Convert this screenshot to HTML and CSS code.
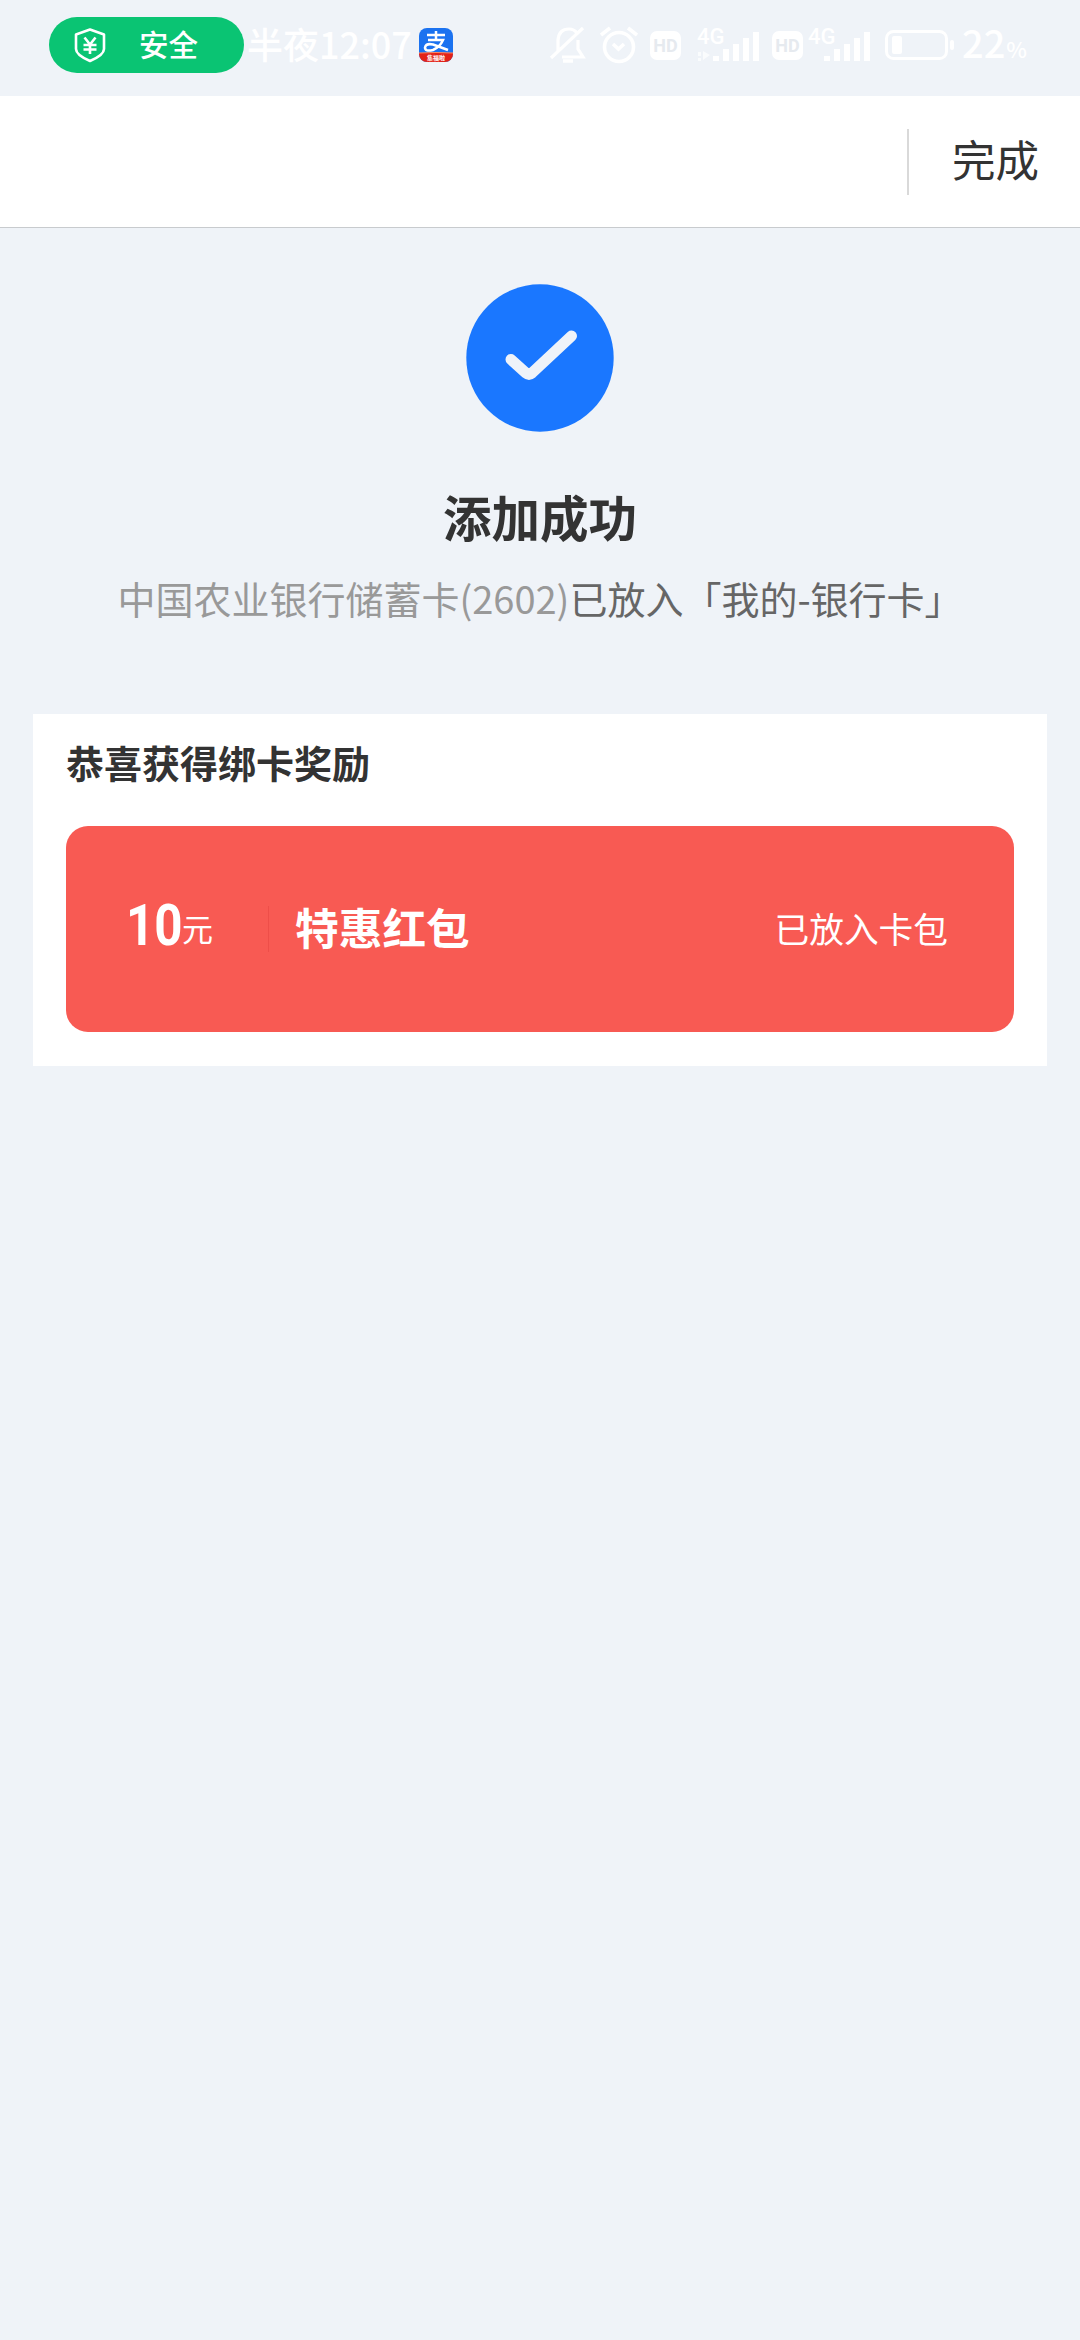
FILE: index.html
```html
<!DOCTYPE html>
<html lang="zh-CN">
<head>
  <meta charset="utf-8">
  <title>添加成功</title>
  <link rel="stylesheet" href="styles.css">
</head>
<body>
  <div class="statusbar">
    <div class="safe">
      <svg width="32" height="36" viewBox="0 0 32 36" fill="none" stroke="#fff" stroke-width="2.6" stroke-linejoin="round">
        <path d="M16 2.5 30 7.500V22Q30 28 16 34Q2 28 2 22V7.500Z"/>
        <path d="M10.500 10.500 16 17.500 21.500 10.500M16 17.500V27M9.500 18H22.500M9.500 22.500H22.500"/>
      </svg>
      <span>安全</span>
    </div>
    <span class="clock">半夜12:07</span>
    <svg class="alipay" width="34" height="34" viewBox="0 0 34 34">
      <defs><clipPath id="app"><rect width="34" height="34" rx="8"/></clipPath></defs>
      <g clip-path="url(#app)">
        <rect width="34" height="34" fill="#1b72f0"/>
        <path d="M0 25Q17 24 34 25V34H0Z" fill="#e32218"/>
        <path d="M0 25Q17 24 34 25" fill="none" stroke="#ff8a62" stroke-width="1"/>
        <path d="M17 3V12M8 7H26M9 12H24Q21 19 14 22Q6 24 6 19.500Q7 15 14 16.500Q21 19 29 22" fill="none" stroke="#fff" stroke-width="2.500"/>
        <text x="17" y="32" class="alipay-tag">集福啦</text>
      </g>
    </svg>

    <div class="icons">
      <svg class="bell" width="38" height="38" viewBox="0 0 38 38" fill="none" stroke="#fff" stroke-width="3.200">
        <path d="M9 25V14Q10 3 20 3Q25 3 28 7M29 14V23L34 31H13M2 32 34 2"/>
        <path d="M14 35H24" stroke-width="3.500"/>
      </svg>
      <svg class="alarm" width="38" height="38" viewBox="0 0 38 38" fill="none" stroke="#fff" stroke-width="3.600">
        <circle cx="19" cy="21" r="14.500"/>
        <path d="M1 9 10 2M28 2 37 9M13 18 18.500 23 24 18"/>
      </svg>
      <span class="hd">HD</span>
      <div class="signal">
        <span>4G</span>
        <svg width="64" height="32" viewBox="0 0 64 32" fill="#fff">
          <path d="M1 22H4V26H1ZM1 28H4V31H1ZM6 21 13 25 6 30Z" opacity=".7"/>
          <path d="M16 26H22V31H16ZM26 19H32V31H26ZM36 14H42V31H36ZM46 8H52V31H46ZM56 2H62V31H56Z"/>
        </svg>
      </div>
      <span class="hd">HD</span>
      <div class="signal">
        <span>4G</span>
        <svg width="64" height="32" viewBox="0 0 64 32" fill="#fff">
          <path d="M16 26H22V31H16ZM26 19H32V31H26ZM36 14H42V31H36ZM46 8H52V31H46ZM56 2H62V31H56Z"/>
        </svg>
      </div>
      <svg class="battery" width="70" height="30" viewBox="0 0 70 30">
        <rect x="1.500" y="1.500" width="60" height="27" rx="7" fill="none" stroke="#fff" stroke-width="3"/>
        <rect x="7" y="6" width="10" height="18" rx="2" fill="#fff"/>
        <rect x="65" y="10" width="4" height="10" rx="2" fill="#fff"/>
      </svg>
      <span class="percent">22<small>%</small></span>
    </div>
  </div>

  <div class="navbar">
    <div class="done">完成</div>
  </div>

  <div class="result">
    <svg width="148" height="148" viewBox="0 0 148 148">
      <circle cx="74" cy="74" r="73.700" fill="#1a77ff"/>
      <path d="M45 75.500 60 89Q63 91.500 66 89L105.500 52" fill="none" stroke="#eff3f9" stroke-width="11" stroke-linecap="round"/>
    </svg>
    <h1>添加成功</h1>
    <p><span>中国农业银行储蓄卡(2602)</span>已放入「我的-银行卡」</p>
  </div>

  <div class="reward">
    <h2>恭喜获得绑卡奖励</h2>
    <div class="coupon">
      <div class="amount"><b>10</b><span>元</span></div>
      <div class="name">特惠红包</div>
      <div class="state">已放入卡包</div>
    </div>
  </div>
</body>
</html>
```
FILE: styles.css
```css
* {
  box-sizing: border-box;
}

body {
  margin: 0;
  min-height: 2340px;
  background-color: #eff3f8;
  color: #333;
  font-family: "Noto Sans CJK SC", sans-serif;
}

h1, h2, p {
  margin: 0;
}

svg {
  display: block;
  flex: none;
}

/* status bar */
.statusbar {
  display: flex;
  height: 96px;
  padding: 17px 53px 0 49px;
  color: #fff;
  white-space: nowrap;
}

.safe {
  display: flex;
  align-items: center;
  width: 195px;
  height: 56px;
  padding-left: 25px;
  border-radius: 28px;
  background-color: #0ac473;
}

.safe span {
  margin-left: 33px;
  font-size: 29.5px;
  font-weight: 500;
  line-height: 52px;
  height: 56px;
}

.clock {
  width: 170px;
  margin-left: 3px;
  font-size: 36px;
  font-weight: 500;
  line-height: 53px;
}

.alipay {
  margin: 11px 0 0 2px;
}

.alipay-tag {
  fill: #fff;
  font-size: 6px;
  font-weight: 700;
  text-anchor: middle;
}

.icons {
  display: flex;
  align-items: center;
  height: 56px;
  margin-left: auto;
}

.alarm {
  margin: 0 12px 0 13px;
}

.hd {
  width: 31px;
  height: 29px;
  border-radius: 7px;
  background-color: #fff;
  color: #e6eaef;
  font: 700 18px/29px Roboto, sans-serif;
  text-align: center;
}

.signal {
  display: grid;
  width: 64px;
  height: 34px;
  margin: 0 10px 0 16px;
}

.signal span, .signal svg {
  grid-area: 1 / 1;
}

.signal span {
  font: 500 22px/18px Roboto, sans-serif;
}

.signal svg {
  margin-top: 2px;
}

.signal + .hd {
  margin-left: 1px;
}

.signal + .battery {
  margin-left: 3px;
}

.hd:nth-of-type(2) + .signal {
  margin-left: 5px;
}

.percent {
  margin-left: 7px;
  font-size: 38px;
  font-weight: 500;
  line-height: 56px;
}

.percent small {
  margin-left: 1px;
  font-size: 22px;
}

/* title bar */
.navbar {
  display: flex;
  justify-content: flex-end;
  align-items: center;
  height: 132px;
  border-bottom: 1px solid #c8cbce;
  background-color: #fff;
}

.done {
  width: 173px;
  height: 66px;
  padding-left: 43px;
  border-left: 2px solid #d9d9d9;
  font-size: 43.5px;
  line-height: 60px;
}

/* result */
.result {
  display: flex;
  flex-direction: column;
  align-items: center;
  height: 486px;
  padding-top: 56px;
}

.result h1 {
  margin-top: 50px;
  font-size: 48.5px;
  font-weight: 700;
  line-height: 68px;
}

.result p {
  margin-top: 18px;
  color: #666;
  font-size: 38px;
  line-height: 60px;
}

.result p span {
  color: #999;
}

/* reward card */
.reward {
  width: 1014px;
  height: 352px;
  margin: 0 auto;
  padding: 20px 33px 34px;
  background-color: #fff;
}

.reward h2 {
  height: 92px;
  font-size: 38px;
  font-weight: 700;
  line-height: 55px;
}

.coupon {
  display: flex;
  align-items: center;
  height: 206px;
  padding: 0 66px 0 60px;
  border-radius: 22px;
  background-color: #f85a53;
  color: #fff;
}

.amount {
  display: flex;
  align-items: center;
  width: 143px;
  height: 46px;
  border-right: 1px solid #ee4e49;
}

.amount b {
  width: 56px;
  font-family: Roboto, sans-serif;
  font-size: 58px;
  line-height: 46px;
  padding-bottom: 8px;
  transform: scaleX(.85);
  transform-origin: left;
}

.amount span {
  padding-bottom: 3px;
  font-size: 31px;
  line-height: 40px;
}

.name {
  margin-left: 26px;
  padding-bottom: 7px;
  font-size: 43.7px;
  font-weight: 700;
}

.state {
  margin-left: auto;
  padding-bottom: 2px;
  font-size: 34.7px;
}
```
